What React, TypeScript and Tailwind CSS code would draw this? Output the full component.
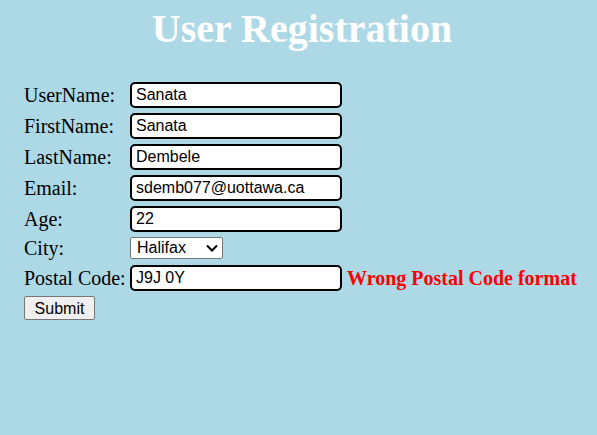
import React from 'react';

const Field: React.FC<{ label: string; value: string; error?: string }> = ({ label, value, error }) => (
  <div className="flex h-[26px] items-center">
    <label className="w-[106px] shrink-0 font-['Liberation_Serif','Times_New_Roman',serif] text-[20px] leading-[23px] text-black">
      {label}
    </label>
    <input
      readOnly
      value={value}
      className="h-[26px] w-[212px] rounded-[5px] border-2 border-black bg-white px-[4px] font-['Liberation_Sans',Arial,sans-serif] text-[16px] text-black outline-none"
    />
    {error && (
      <span className="ml-[5px] font-['Liberation_Serif','Times_New_Roman',serif] text-[20px] font-bold leading-[23px] text-[#ff0000]">
        {error}
      </span>
    )}
  </div>
);

const App: React.FC = () => {
  return (
    <div className="min-h-screen w-full bg-[#add8e6] pt-[6px]">
      <h1 className="pl-[7px] text-center font-['Liberation_Serif','Times_New_Roman',serif] text-[40px] font-bold leading-[46px] text-white">
        User Registration
      </h1>

      <form className="mt-[30px] flex flex-col gap-[5px] pl-[24px]" onSubmit={(e) => e.preventDefault()}>
        <Field label="UserName:" value="Sanata" />
        <Field label="FirstName:" value="Sanata" />
        <Field label="LastName:" value="Dembele" />
        <Field label="Email:" value="sdemb077@uottawa.ca" />
        <Field label="Age:" value="22" />

        {/* City select */}
        <div className="flex h-[23px] items-start">
          <label className="w-[106px] shrink-0 font-['Liberation_Serif','Times_New_Roman',serif] text-[20px] leading-[23px] text-black">
            City:
          </label>
          <div className="flex h-[22px] w-[93px] items-center justify-between rounded-[2px] border border-[#767676] bg-white pl-[6px] pr-[4px] font-['Liberation_Sans',Arial,sans-serif] text-[16px] text-black">
            <span>Halifax</span>
            <svg width="12" height="8" viewBox="0 0 12 8" fill="none">
              <path d="M1 1.5l5 5 5-5" stroke="#000" strokeWidth="2" />
            </svg>
          </div>
        </div>

        <Field label="Postal Code:" value="J9J 0Y" error="Wrong Postal Code format" />

        <div>
          <button
            type="submit"
            className="h-[24px] w-[71px] rounded-[2px] border border-[#767676] bg-[#efefef] font-['Liberation_Sans',Arial,sans-serif] text-[16px] text-black"
          >
            Submit
          </button>
        </div>
      </form>
    </div>
  );
};

export default App;
